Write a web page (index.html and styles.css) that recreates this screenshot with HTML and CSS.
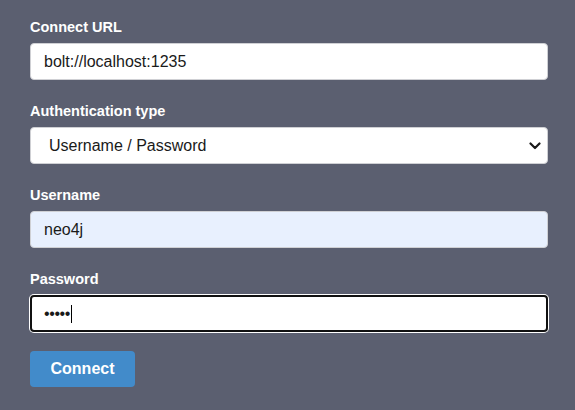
FILE: index.html
```html
<!DOCTYPE html>
<html lang="en">
<head>
<meta charset="utf-8">
<title>Connect</title>
<link rel="stylesheet" href="styles.css">
</head>
<body>
<form class="form">
  <div class="group">
    <label class="label" for="url">Connect URL</label>
    <input class="field" id="url" type="text" value="bolt://localhost:1235">
  </div>
  <div class="group">
    <label class="label" for="auth">Authentication type</label>
    <div class="select-wrap">
      <select class="field select" id="auth">
        <option>Username / Password</option>
      </select>
      <svg class="chevron" width="12" height="8" viewBox="0 0 12 8" aria-hidden="true">
        <path d="M1.5 1.5 L6 6 L10.5 1.5" fill="none" stroke="#1a1a1a" stroke-width="2.2" stroke-linecap="round" stroke-linejoin="round"/>
      </svg>
    </div>
  </div>
  <div class="group">
    <label class="label" for="user">Username</label>
    <input class="field autofill" id="user" type="text" value="neo4j">
  </div>
  <div class="group">
    <label class="label" for="pass">Password</label>
    <div class="field focused" id="pass"><span class="dots">•••••</span><span class="caret"></span></div>
  </div>
  <button class="btn" type="button">Connect</button>
</form>
</body>
</html>
```

FILE: styles.css
```css
html, body {
  margin: 0;
  padding: 0;
  background: #5b5f70;
  font-family: "Liberation Sans", Arial, sans-serif;
}
.form {
  display: flex;
  flex-direction: column;
  padding: 19px 27px 0 30px;
}
.group {
  display: flex;
  flex-direction: column;
  margin-bottom: 23px;
}
.group:last-of-type {
  margin-bottom: 19px;
}
.label {
  color: #ffffff;
  font-weight: bold;
  font-size: 14.5px;
  line-height: 16px;
  margin-bottom: 8px;
}
.field {
  box-sizing: border-box;
  height: 37px;
  width: 100%;
  margin: 0;
  padding: 0 13px;
  border: 1px solid #cfd0d4;
  border-radius: 4px;
  background: #ffffff;
  color: #1a1a1a;
  font-family: "Liberation Sans", Arial, sans-serif;
  font-size: 16px;
  outline: none;
}
.select-wrap {
  position: relative;
  display: flex;
}
.select {
  -webkit-appearance: none;
  appearance: none;
  padding: 0 30px 0 18px;
}
.chevron {
  position: absolute;
  right: 7px;
  top: 15px;
  pointer-events: none;
}
.autofill {
  background: #e8f0fe;
}
.focused {
  display: flex;
  align-items: center;
  border: 2px solid #111111;
  padding: 0 12px;
  box-shadow: 0 0 0 1px #ffffff;
}
.dots {
  letter-spacing: -0.4px;
}
.caret {
  display: inline-block;
  width: 1px;
  height: 18px;
  background: #000;
  margin-left: 1px;
}
.btn {
  align-self: flex-start;
  box-sizing: border-box;
  height: 36px;
  width: 105px;
  border: none;
  border-radius: 4px;
  background: #428bca;
  color: #ffffff;
  font-family: "Liberation Sans", Arial, sans-serif;
  font-weight: bold;
  font-size: 16px;
  padding: 0;
}
```
